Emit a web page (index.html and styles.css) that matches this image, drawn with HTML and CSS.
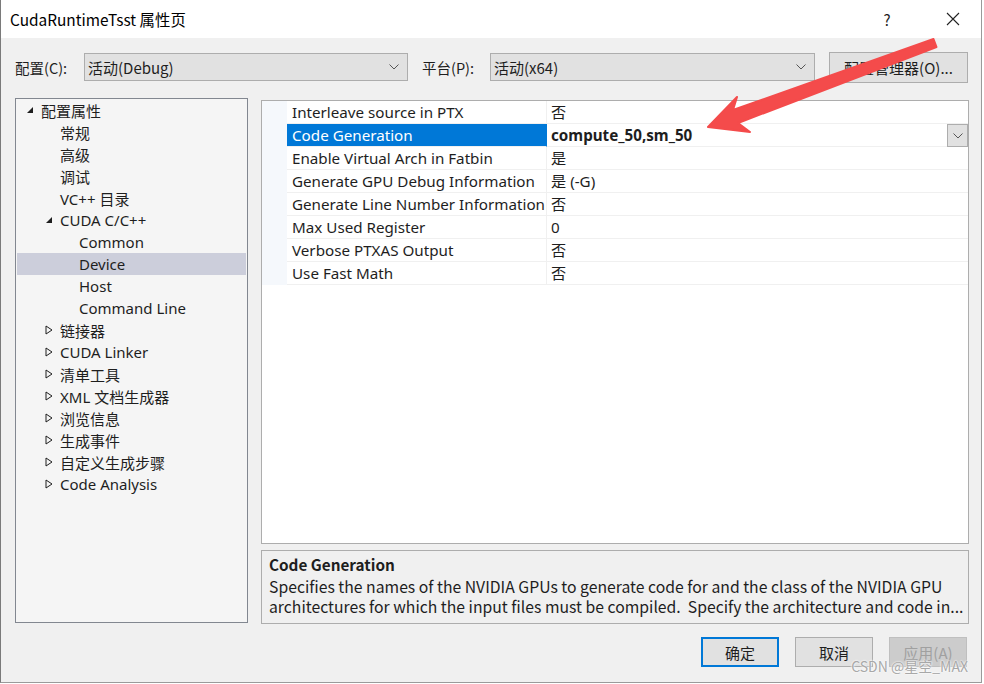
FILE: index.html
```html
<!DOCTYPE html>
<html lang="zh-CN">
<head>
    <meta charset="UTF-8">
    <title>CudaRuntimeTsst 属性页</title>
    <link rel="stylesheet" href="styles.css">
</head>
<body>
    <div class="window">
        <div class="titlebar">
            <span class="title">CudaRuntimeTsst 属性页</span>
            <span class="help">?</span>
            <span class="close">
                <svg width="14" height="14" viewBox="0 0 14 14"><path d="M1 1 L13 13 M13 1 L1 13" stroke="#222" stroke-width="1.1" fill="none"/></svg>
            </span>
        </div>

        <div class="configbar">
            <span class="label">配置(C):</span>
            <div class="combo combo-config">
                <span>活动(Debug)</span>
                <svg class="chev" width="10" height="6" viewBox="0 0 10 6"><path d="M0.5 0.5 L5 5 L9.5 0.5" stroke="#555" fill="none"/></svg>
            </div>
            <span class="label label-platform">平台(P):</span>
            <div class="combo combo-platform">
                <span>活动(x64)</span>
                <svg class="chev" width="10" height="6" viewBox="0 0 10 6"><path d="M0.5 0.5 L5 5 L9.5 0.5" stroke="#555" fill="none"/></svg>
            </div>
            <div class="button btn-manager">配置管理器(O)...</div>
        </div>

        <div class="main">
            <div class="tree">
                <div class="node lv0"><span class="tog"><svg width="8" height="8" viewBox="0 0 8 8"><path d="M7 1 L7 7 L1 7 Z" fill="#1e1e1e"/></svg></span>配置属性</div>
                <div class="node lv1"><span class="tog"></span>常规</div>
                <div class="node lv1"><span class="tog"></span>高级</div>
                <div class="node lv1"><span class="tog"></span>调试</div>
                <div class="node lv1"><span class="tog"></span>VC++ 目录</div>
                <div class="node lv1"><span class="tog"><svg width="8" height="8" viewBox="0 0 8 8"><path d="M7 1 L7 7 L1 7 Z" fill="#1e1e1e"/></svg></span>CUDA C/C++</div>
                <div class="node lv2"><span class="tog"></span>Common</div>
                <div class="node lv2 selected"><span class="tog"></span>Device</div>
                <div class="node lv2"><span class="tog"></span>Host</div>
                <div class="node lv2"><span class="tog"></span>Command Line</div>
                <div class="node lv1"><span class="tog"><svg width="8" height="10" viewBox="0 0 8 10"><path d="M1 1 L7 5 L1 9 Z" stroke="#1e1e1e" fill="none"/></svg></span>链接器</div>
                <div class="node lv1"><span class="tog"><svg width="8" height="10" viewBox="0 0 8 10"><path d="M1 1 L7 5 L1 9 Z" stroke="#1e1e1e" fill="none"/></svg></span>CUDA Linker</div>
                <div class="node lv1"><span class="tog"><svg width="8" height="10" viewBox="0 0 8 10"><path d="M1 1 L7 5 L1 9 Z" stroke="#1e1e1e" fill="none"/></svg></span>清单工具</div>
                <div class="node lv1"><span class="tog"><svg width="8" height="10" viewBox="0 0 8 10"><path d="M1 1 L7 5 L1 9 Z" stroke="#1e1e1e" fill="none"/></svg></span>XML 文档生成器</div>
                <div class="node lv1"><span class="tog"><svg width="8" height="10" viewBox="0 0 8 10"><path d="M1 1 L7 5 L1 9 Z" stroke="#1e1e1e" fill="none"/></svg></span>浏览信息</div>
                <div class="node lv1"><span class="tog"><svg width="8" height="10" viewBox="0 0 8 10"><path d="M1 1 L7 5 L1 9 Z" stroke="#1e1e1e" fill="none"/></svg></span>生成事件</div>
                <div class="node lv1"><span class="tog"><svg width="8" height="10" viewBox="0 0 8 10"><path d="M1 1 L7 5 L1 9 Z" stroke="#1e1e1e" fill="none"/></svg></span>自定义生成步骤</div>
                <div class="node lv1"><span class="tog"><svg width="8" height="10" viewBox="0 0 8 10"><path d="M1 1 L7 5 L1 9 Z" stroke="#1e1e1e" fill="none"/></svg></span>Code Analysis</div>
            </div>

            <div class="rightcol">
                <div class="grid">
                    <div class="row"><div class="gutter"></div><div class="name">Interleave source in PTX</div><div class="value">否</div></div>
                    <div class="row active"><div class="gutter"></div><div class="name">Code Generation</div><div class="value"><b>compute_50,sm_50</b>
                        <span class="drop"><svg width="10" height="6" viewBox="0 0 10 6"><path d="M0.5 0.5 L5 5 L9.5 0.5" stroke="#555" fill="none"/></svg></span></div></div>
                    <div class="row"><div class="gutter"></div><div class="name">Enable Virtual Arch in Fatbin</div><div class="value">是</div></div>
                    <div class="row"><div class="gutter"></div><div class="name">Generate GPU Debug Information</div><div class="value">是 (-G)</div></div>
                    <div class="row"><div class="gutter"></div><div class="name">Generate Line Number Information</div><div class="value">否</div></div>
                    <div class="row"><div class="gutter"></div><div class="name">Max Used Register</div><div class="value">0</div></div>
                    <div class="row"><div class="gutter"></div><div class="name">Verbose PTXAS Output</div><div class="value">否</div></div>
                    <div class="row"><div class="gutter"></div><div class="name">Use Fast Math</div><div class="value">否</div></div>
                </div>
                <div class="desc">
                    <div class="desc-title">Code Generation</div>
                    <div class="desc-line">Specifies the names of the NVIDIA GPUs to generate code for and the class of the NVIDIA GPU</div>
                    <div class="desc-line">architectures for which the input files must be compiled.&nbsp; Specify the architecture and code in...</div>
                </div>
            </div>
        </div>

        <div class="footer">
            <div class="button btn-ok">确定</div>
            <div class="button">取消</div>
            <div class="button disabled">应用(A)</div>
        </div>

        <!-- annotation drawn on top of the screenshot -->
        <svg class="arrow" width="984" height="140" viewBox="0 0 984 140">
            <path d="M936.5 47 L933.5 39 L733 110 L737 97 L708 127 L750 132 L738 123 Z" fill="#f44b4b" stroke="#f44b4b" stroke-width="2" stroke-linejoin="round"/>
        </svg>
        <div class="watermark">CSDN @星空_MAX</div>
    </div>
</body>
</html>
```

FILE: styles.css
```css
* {
    margin: 0;
    padding: 0;
    box-sizing: border-box;
}
body {
    width: 984px;
    height: 684px;
    background: #ffffff;
    font-family: "Noto Sans", "Noto Sans CJK SC", sans-serif;
    font-size: 15px;
    color: #1e1e1e;
    overflow: hidden;
}
.window {
    position: relative;
    width: 982px;
    height: 683px;
    background: #f0f0f0;
    border-left: 1px solid #7a7a7a;
    border-right: 1px solid #9a9a9a;
    border-bottom: 1px solid #9a9a9a;
    display: flex;
    flex-direction: column;
}
.titlebar {
    height: 38px;
    background: #ffffff;
    display: flex;
    align-items: center;
    padding-left: 9px;
}
.title {
    font-family: "Noto Sans CJK SC", sans-serif;
    font-size: 15.4px;
    color: #000;
    flex: 1;
}
.help {
    font-family: "Noto Sans CJK SC", sans-serif;
    font-size: 15px;
    width: 20px;
    margin-right: 49px;
    text-align: center;
}
.close {
    display: flex;
    width: 14px;
    margin-right: 21px;
}
.configbar {
    display: flex;
    align-items: center;
    height: 30px;
    margin-top: 14px;
    padding-left: 14px;
}
.label {
    font-family: "Noto Sans CJK SC", sans-serif;
    font-size: 14.5px;
    width: 69px;
}
.label-platform {
    width: 68px;
    margin-left: 14px;
}
.combo {
    height: 28px;
    background: #e1e1e1;
    border: 1px solid #adadad;
    display: flex;
    align-items: center;
    justify-content: space-between;
    padding: 0 8px 0 3px;
    font-family: "Noto Sans CJK SC", sans-serif;
    font-size: 15px;
}
.combo-config { width: 324px; }
.combo-platform { width: 325px; }
.button {
    height: 30px;
    background: #e1e1e1;
    border: 1px solid #adadad;
    display: flex;
    align-items: center;
    justify-content: center;
    font-family: "Noto Sans CJK SC", sans-serif;
    font-size: 15px;
    width: 78px;
}
.btn-manager {
    width: 139px;
    height: 31px;
    margin-left: 14px;
}
.main {
    display: flex;
    margin-top: 16px;
    margin-left: 14px;
    height: 526px;
}
.tree {
    width: 233px;
    height: 525px;
    background: #f5f5f5;
    border: 1px solid #828790;
    padding: 0 1px;
}
.node {
    height: 22px;
    display: flex;
    align-items: center;
    white-space: nowrap;
}
.node.lv0 { padding-left: 9px; }
.node.lv1 { padding-left: 28px; }
.node.lv2 { padding-left: 47px; }
.node.selected { background: #cccedb; }
.tog {
    width: 15px;
    display: flex;
    align-items: center;
}
.rightcol {
    margin-left: 13px;
    width: 708px;
    display: flex;
    flex-direction: column;
    margin-top: 2px;
}
.grid {
    height: 446px;
    background: #ffffff;
    border: 1px solid #adadad;
    font-size: 15.2px;
}
.row {
    display: flex;
    height: 23px;
}
.gutter {
    width: 25px;
    background: #f5f8fc;
}
.name {
    width: 260px;
    padding-left: 5px;
    line-height: 23px;
    border-bottom: 1px solid #f0f0f0;
    border-right: 1px solid #f0f0f0;
    white-space: nowrap;
    overflow: hidden;
}
.value {
    flex: 1;
    padding-left: 4px;
    line-height: 23px;
    border-bottom: 1px solid #f0f0f0;
    position: relative;
}
.row.active .name {
    background: #0078d7;
    color: #ffffff;
    border-right-color: #0078d7;
}
.value b { font-weight: 700; }
.drop {
    position: absolute;
    right: 0;
    top: 0;
    width: 21px;
    height: 23px;
    background: #e1e1e1;
    border: 1px solid #adadad;
    display: flex;
    align-items: center;
    justify-content: center;
}
.desc {
    margin-top: 6px;
    height: 74px;
    border: 1px solid #adadad;
    padding: 2px 7px;
    font-family: "Noto Sans CJK SC", sans-serif;
    font-size: 15.75px;
    overflow: hidden;
}
.desc-title {
    font-weight: 700;
    font-size: 15.3px;
    line-height: 22px;
    margin-bottom: 2px;
}
.desc-line {
    height: 20px;
    line-height: 20px;
    white-space: nowrap;
}
.footer {
    display: flex;
    justify-content: flex-end;
    gap: 16px;
    margin-top: 13px;
    padding-right: 14px;
}
.btn-ok {
    border: 2px solid #0078d7;
}
.button.disabled {
    background: #cccccc;
    border-color: #bfbfbf;
    color: #a0a0a0;
}
.arrow {
    position: absolute;
    left: -1px;
    top: 0;
}
.watermark {
    position: absolute;
    right: 13px;
    top: 656px;
    font-family: "Noto Sans CJK SC", sans-serif;
    font-size: 14px;
    color: #a8a8a8;
    text-shadow: 0 0 2px #fff, 0 0 2px #fff;
}
```
